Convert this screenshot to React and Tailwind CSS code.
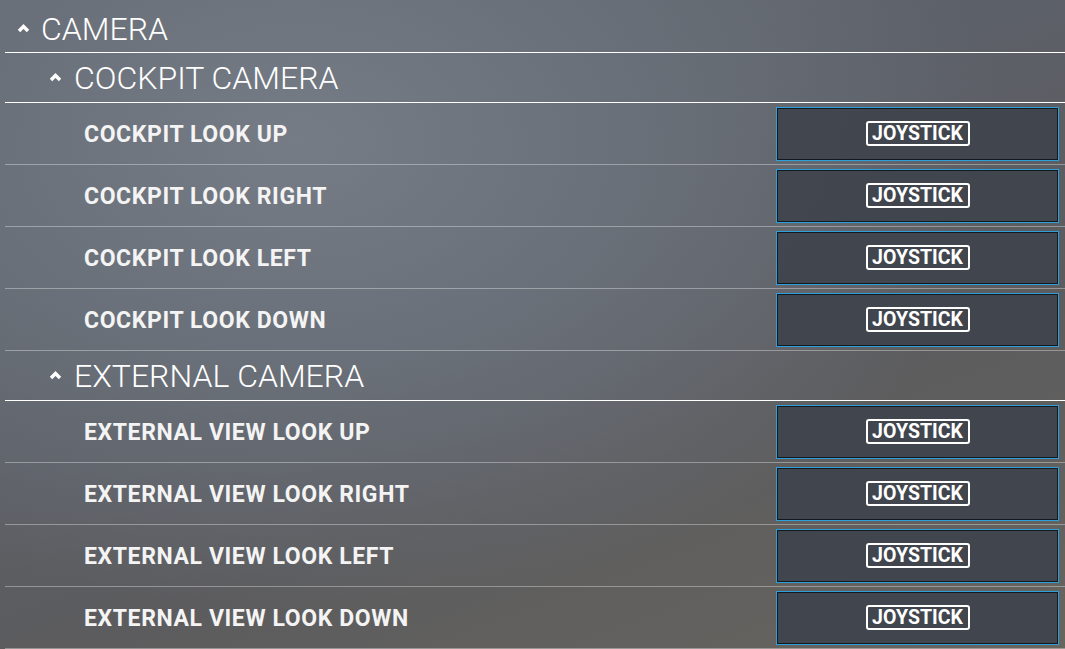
import React from "react";

const sections = [
  {
    title: "COCKPIT CAMERA",
    rows: ["COCKPIT LOOK UP", "COCKPIT LOOK RIGHT", "COCKPIT LOOK LEFT", "COCKPIT LOOK DOWN"],
  },
  {
    title: "EXTERNAL CAMERA",
    rows: [
      "EXTERNAL VIEW LOOK UP",
      "EXTERNAL VIEW LOOK RIGHT",
      "EXTERNAL VIEW LOOK LEFT",
      "EXTERNAL VIEW LOOK DOWN",
    ],
  },
];

const Caret = () => (
  <svg width="13" height="10" viewBox="0 0 13 10" className="shrink-0 mt-[-2px]">
    <polyline points="2,8 6.5,3.5 11,8" fill="none" stroke="white" strokeWidth="3.4" />
  </svg>
);

const BindingRow = ({ label }) => (
  <div className="h-[62px] flex items-center border-b border-white/35">
    <div className="flex-1 pl-[79px] pt-[4px] text-[23px] font-bold text-[#f4f4f4] tracking-[0.6px]">
      {label}
    </div>
    <button className="w-[283px] h-[54px] mr-[6px] flex items-center justify-center bg-[#3f444d]/95 border border-[#2ca0da] shadow-[inset_0_0_0_1px_#15191f]">
      <span className="w-[104px] h-[25px] pt-[1px] flex items-center justify-center rounded-[3px] border-2 border-white text-[19.5px] font-bold text-white leading-none">
        JOYSTICK
      </span>
    </button>
  </div>
);

export default function App() {
  return (
    <div
      className="w-full h-[649px] overflow-hidden pt-[5px] pl-[5px] bg-[radial-gradient(ellipse_at_28%_22%,#757c85_0%,#6a7079_30%,rgba(90,93,98,0)_65%),linear-gradient(160deg,#616872_0%,#5c6068_35%,#5c5c5e_65%,#68655f_100%)]"
      style={{ fontFamily: "Roboto, 'Liberation Sans', sans-serif" }}
    >
      <div className="h-[48px] flex items-center border-b border-white pl-[12px] gap-[11px] text-white">
        <Caret />
        <span className="text-[32px] font-light leading-none">CAMERA</span>
      </div>
      {sections.map((s) => (
        <div key={s.title}>
          <div className="h-[50px] flex items-center border-b border-white pl-[44px] gap-[12px] text-white">
            <Caret />
            <span className="text-[32px] font-light leading-none">{s.title}</span>
          </div>
          {s.rows.map((r) => (
            <BindingRow key={r} label={r} />
          ))}
        </div>
      ))}
    </div>
  );
}
